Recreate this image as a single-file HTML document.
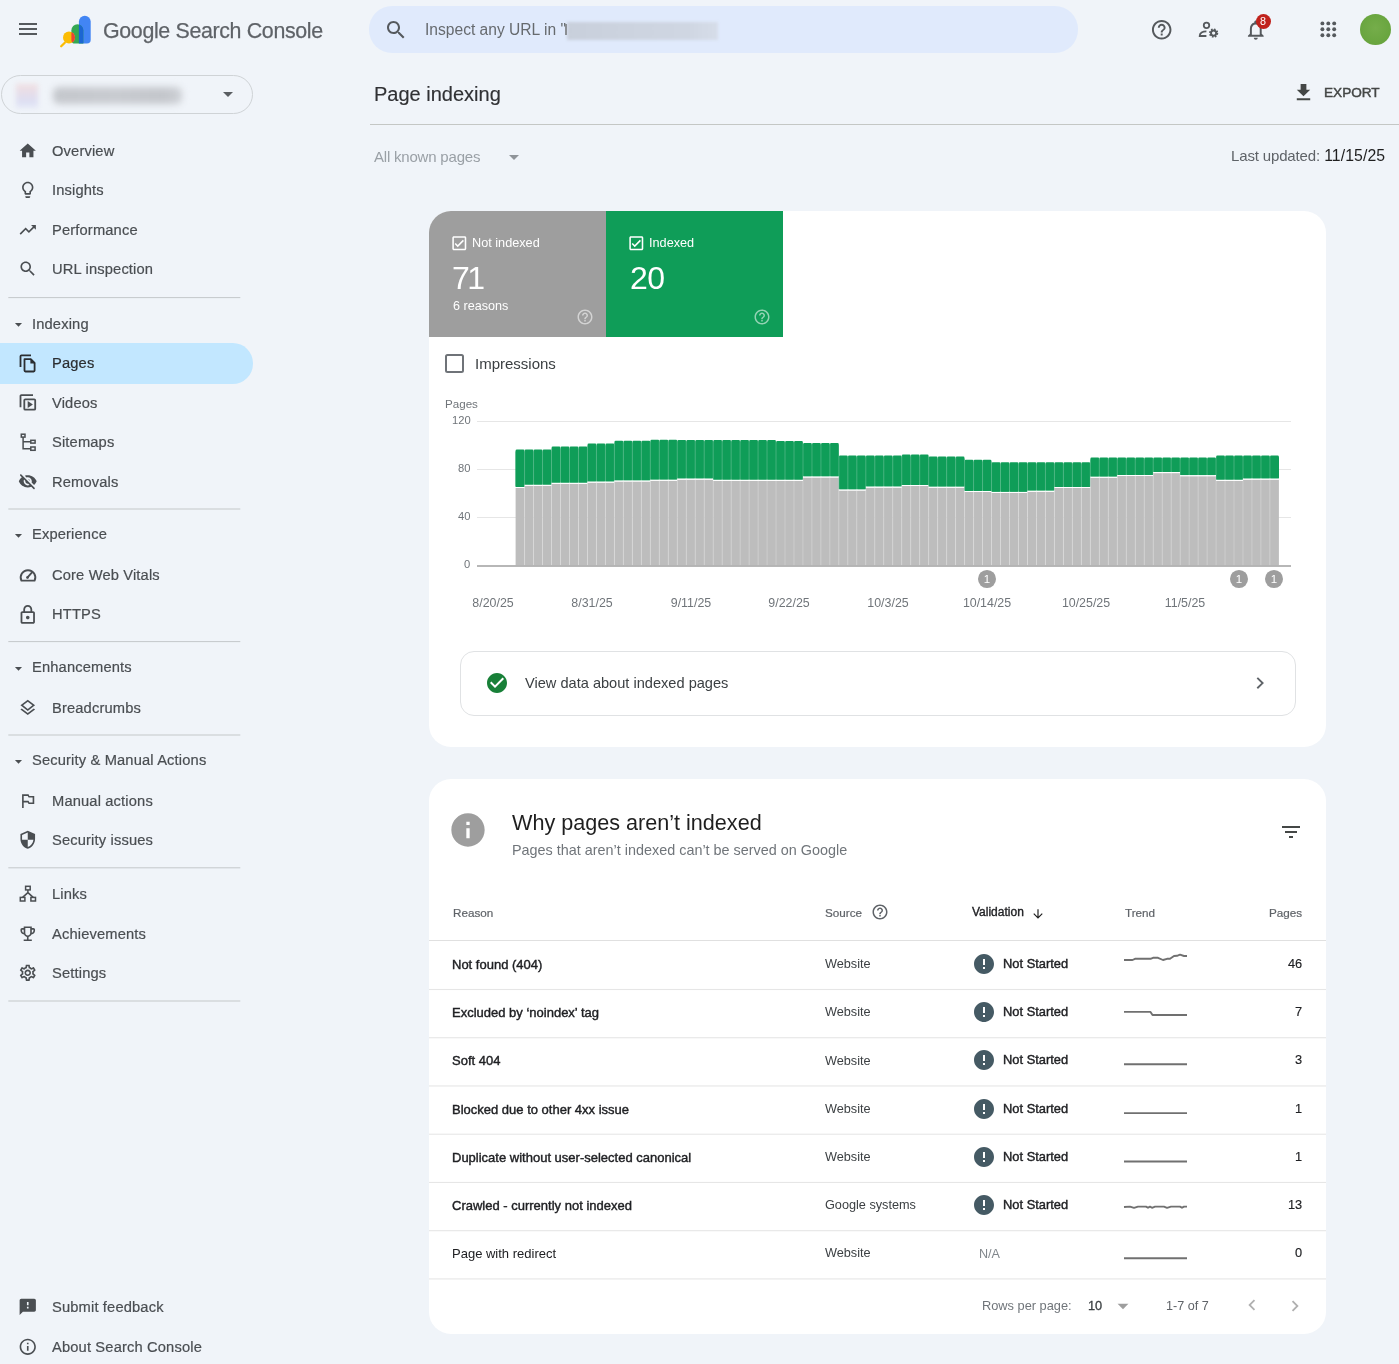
<!DOCTYPE html><html><head><meta charset="utf-8"><style>
html,body{margin:0;padding:0;}
body{width:1399px;height:1364px;overflow:hidden;position:relative;background:#f0f4f9;font-family:"Liberation Sans", sans-serif;}
.t{position:absolute;white-space:nowrap;line-height:1;will-change:transform;}
svg{display:block;}
</style></head><body>
<div style="position:absolute;left:19px;top:23.4px;width:18px;height:1.9px;background:#55595d;"></div>
<div style="position:absolute;left:19px;top:28.4px;width:18px;height:1.9px;background:#55595d;"></div>
<div style="position:absolute;left:19px;top:33.4px;width:18px;height:1.9px;background:#55595d;"></div>
<svg style="position:absolute;left:56px;top:12px;" width="40" height="40" viewBox="0 0 40 40">
<defs>
<clipPath id="cg"><path d="M15.4 18.25 a5.95 5.95 0 0 1 11.9 0 V31.5 H19 a3.6 3.6 0 0 1 -3.6 -3.6 Z"/></clipPath>
</defs>
<path d="M22.9 9.6 a5.9 5.9 0 0 1 11.8 0 V27.7 a3.8 3.8 0 0 1 -3.8 3.8 H22.9 Z" fill="#4285f4"/>
<path d="M15.4 18.25 a5.95 5.95 0 0 1 11.9 0 V31.5 H19 a3.6 3.6 0 0 1 -3.6 -3.6 Z" fill="#34a853"/>
<path d="M22.9 9.6 a5.9 5.9 0 0 1 11.8 0 V27.7 a3.8 3.8 0 0 1 -3.8 3.8 H22.9 Z" fill="#1b66d2" clip-path="url(#cg)"/>
<circle cx="13" cy="25.6" r="6" fill="#fbbc04"/>
<circle cx="13" cy="25.6" r="6" fill="#ea4335" clip-path="url(#cg)"/>
<line x1="5.2" y1="34.3" x2="8.8" y2="30.8" stroke="#fbbc04" stroke-width="2.3" stroke-linecap="round"/>
</svg>
<div class="t" style="left:103px;top:20.78px;font-size:21.4px;color:#5f6368;font-weight:400;letter-spacing:-0.35px;-webkit-text-stroke:0.25px #5f6368;">Google Search Console</div>
<div style="position:absolute;left:369px;top:6px;width:709px;height:46.5px;background:#e0eafc;border-radius:23px;"></div>
<svg style="position:absolute;left:384.00px;top:17.50px;" width="24" height="24" viewBox="0 0 24 24"><path fill="#55595d" d="M15.5 14h-.79l-.28-.27C15.41 12.59 16 11.11 16 9.5 16 5.91 13.09 3 9.5 3S3 5.91 3 9.5 5.91 16 9.5 16c1.61 0 3.09-.59 4.23-1.57l.27.28v.79l5 4.99L20.49 19l-4.99-5zm-6 0C7.01 14 5 11.99 5 9.5S7.01 5 9.5 5 14 7.01 14 9.5 11.990 14 9.5 14z"/></svg>
<div class="t" style="left:425px;top:21.69px;font-size:15.6px;color:#666a6e;font-weight:400;">Inspect any URL in &quot;</div>
<div style="position:absolute;left:567px;top:21.5px;width:151px;height:18.5px;background:linear-gradient(90deg,#c8cfdb 0%,#ccd3df 40%,#cfd6e2 80%,#d6dde9 100%);filter:blur(1.6px);"></div>
<div style="position:absolute;left:565.4px;top:23.5px;width:1.2px;height:11.8px;background:#8a8e93;"></div>
<svg style="position:absolute;left:1149.60px;top:17.50px;" width="23.4" height="23.4" viewBox="0 0 24 24"><path fill="#55595d" d="M11 18h2v-2h-2v2zm1-16C6.48 2 2 6.48 2 12s4.48 10 10 10 10-4.48 10-10S17.52 2 12 2zm0 18c-4.41 0-8-3.59-8-8s3.59-8 8-8 8 3.59 8 8-3.59 8-8 8zm0-14c-2.21 0-4 1.79-4 4h2c0-1.1.9-2 2-2s2 .9 2 2c0 2-3 1.75-3 5h2c0-2.25 3-2.5 3-5 0-2.21-1.79-4-4-4z"/></svg>
<svg style="position:absolute;left:1190px;top:15px;" width="32" height="28" viewBox="0 0 32 28"><g transform="translate(-1190,-15)">
<circle cx="1206.5" cy="25.3" r="2.75" fill="none" stroke="#55595d" stroke-width="1.8"/>
<path d="M1206.4 31.3 C1202.6 31.3 1199.7 33.2 1199.7 36 H1206.4" fill="none" stroke="#55595d" stroke-width="1.8"/>
<circle cx="1213.6" cy="33.1" r="3.7" fill="none" stroke="#55595d" stroke-width="1.9" stroke-dasharray="1.55 1.35"/>
<circle cx="1213.6" cy="33.1" r="2.6" fill="none" stroke="#55595d" stroke-width="1.9"/>
</g></svg>
<svg style="position:absolute;left:1244.00px;top:18.20px;" width="23.6" height="23.6" viewBox="0 0 24 24"><path fill="#55595d" d="M12 22c1.1 0 2-.9 2-2h-4c0 1.1.89 2 2 2zm6-6v-5c0-3.07-1.64-5.64-4.5-6.32V4c0-.83-.67-1.5-1.5-1.5s-1.5.67-1.5 1.5v.68C7.63 5.36 6 7.920 6 11v5l-2 2v1h16v-1l-2-2zm-2 1H8v-6c0-2.48 1.51-4.5 4-4.5s4 2.02 4 4.5v6z"/></svg>
<div style="position:absolute;left:1255.9px;top:13.8px;width:15px;height:15px;border-radius:50%;background:#c0221c;"></div>
<div class="t" style="left:1263.4px;transform:translateX(-50%);top:16.16px;font-size:10.8px;color:#ffffff;font-weight:400;">8</div>
<svg style="position:absolute;left:1320.3px;top:21.2px;" width="17" height="17" viewBox="0 0 17 17"><circle cx="2.40" cy="2.40" r="1.95" fill="#55595d"/><circle cx="2.40" cy="8.30" r="1.95" fill="#55595d"/><circle cx="2.40" cy="14.20" r="1.95" fill="#55595d"/><circle cx="8.30" cy="2.40" r="1.95" fill="#55595d"/><circle cx="8.30" cy="8.30" r="1.95" fill="#55595d"/><circle cx="8.30" cy="14.20" r="1.95" fill="#55595d"/><circle cx="14.20" cy="2.40" r="1.95" fill="#55595d"/><circle cx="14.20" cy="8.30" r="1.95" fill="#55595d"/><circle cx="14.20" cy="14.20" r="1.95" fill="#55595d"/></svg>
<div style="position:absolute;left:1360.3px;top:13.7px;width:31.2px;height:31.2px;border-radius:50%;background:radial-gradient(circle at 50% 45%,#75ad4a 0%,#6aa640 60%,#649f3b 100%);"></div>
<div style="position:absolute;left:1px;top:75px;width:249.5px;height:36.5px;border:1px solid #cfd3d6;border-radius:20px;"></div>
<div style="position:absolute;left:16px;top:83.5px;width:22px;height:24px;background:linear-gradient(180deg,#f1dfe1 0%,#e4ddeb 45%,#dcdff3 75%,#e6e9f6 100%);filter:blur(2.5px);"></div>
<div style="position:absolute;left:53px;top:86.5px;width:129px;height:17px;background:linear-gradient(90deg,#c4c7cc,#c8cbd0 50%,#c3c6cb 85%,#cdd0d5);filter:blur(3.6px);border-radius:6px;"></div>
<svg style="position:absolute;left:216.00px;top:82.00px;" width="24" height="24" viewBox="0 0 24 24"><path fill="#5a5e62" d="M7 10l5 5 5-5z"/></svg>
<div style="position:absolute;left:0px;top:343.3px;width:252.7px;height:40.3px;background:#c2e7ff;border-radius:0 20.15px 20.15px 0;"></div>
<div class="t" style="left:52px;top:143.85px;font-size:14.7px;color:#4a4e52;font-weight:400;letter-spacing:0.15px;-webkit-text-stroke:0.2px #4a4e52;">Overview</div>
<svg style="position:absolute;left:18.25px;top:140.95px;" width="19.5" height="19.5" viewBox="0 0 24 24"><path fill="#4a4e52" d="M10 20v-6h4v6h5v-8h3L12 3 2 12h3v8z"/></svg>
<div class="t" style="left:52px;top:183.25px;font-size:14.7px;color:#4a4e52;font-weight:400;letter-spacing:0.15px;-webkit-text-stroke:0.2px #4a4e52;">Insights</div>
<svg style="position:absolute;left:18.25px;top:180.35px;" width="19.5" height="19.5" viewBox="0 0 24 24"><path fill="#4a4e52" d="M9 21c0 .55.45 1 1 1h4c.55 0 1-.45 1-1v-1H9v1zm3-19C8.14 2 5 5.14 5 9c0 2.38 1.19 4.47 3 5.74V17c0 .55.45 1 1 1h6c.55 0 1-.45 1-1v-2.26c1.81-1.27 3-3.36 3-5.74 0-3.86-3.14-7-7-7zm2.85 11.1l-.85.6V16h-4v-2.3l-.85-.6C7.8 12.16 7 10.630 7 9c0-2.76 2.24-5 5-5s5 2.24 5 5c0 1.63-.8 3.16-2.15 4.1z"/></svg>
<div class="t" style="left:52px;top:222.65px;font-size:14.7px;color:#4a4e52;font-weight:400;letter-spacing:0.15px;-webkit-text-stroke:0.2px #4a4e52;">Performance</div>
<svg style="position:absolute;left:18.25px;top:219.75px;" width="19.5" height="19.5" viewBox="0 0 24 24"><path fill="#4a4e52" d="M16 6l2.29 2.29-4.88 4.88-4-4L2 16.59 3.41 18l6-6 4 4 6.3-6.29L22 12V6z"/></svg>
<div class="t" style="left:52px;top:262.05px;font-size:14.7px;color:#4a4e52;font-weight:400;letter-spacing:0.15px;-webkit-text-stroke:0.2px #4a4e52;">URL inspection</div>
<svg style="position:absolute;left:18.25px;top:259.15px;" width="19.5" height="19.5" viewBox="0 0 24 24"><path fill="#4a4e52" d="M15.5 14h-.79l-.28-.27C15.41 12.59 16 11.11 16 9.5 16 5.91 13.09 3 9.5 3S3 5.91 3 9.5 5.91 16 9.5 16c1.61 0 3.09-.59 4.23-1.57l.27.28v.79l5 4.99L20.49 19l-4.99-5zm-6 0C7.01 14 5 11.99 5 9.5S7.01 5 9.5 5 14 7.01 14 9.5 11.990 14 9.5 14z"/></svg>
<div class="t" style="left:52px;top:356.45px;font-size:14.7px;color:#2b2e31;font-weight:400;letter-spacing:0.15px;-webkit-text-stroke:0.2px #2b2e31;">Pages</div>
<div class="t" style="left:52px;top:395.75px;font-size:14.7px;color:#4a4e52;font-weight:400;letter-spacing:0.15px;-webkit-text-stroke:0.2px #4a4e52;">Videos</div>
<div class="t" style="left:52px;top:435.25px;font-size:14.7px;color:#4a4e52;font-weight:400;letter-spacing:0.15px;-webkit-text-stroke:0.2px #4a4e52;">Sitemaps</div>
<div class="t" style="left:52px;top:474.55px;font-size:14.7px;color:#4a4e52;font-weight:400;letter-spacing:0.15px;-webkit-text-stroke:0.2px #4a4e52;">Removals</div>
<svg style="position:absolute;left:18.25px;top:471.65px;" width="19.5" height="19.5" viewBox="0 0 24 24"><path fill="#4a4e52" d="M12 6.5c2.76 0 5 2.24 5 5 0 .51-.1 1-.24 1.46l3.06 3.06c1.39-1.23 2.49-2.77 3.18-4.53C21.27 7.11 17 4 12 4c-1.27 0-2.49.2-3.64.57l2.17 2.17c.47-.14.96-.24 1.47-.24zM2.71 3.16c-.39.39-.39 1.02 0 1.41l1.970 1.97C3.06 7.83 1.77 9.53 1 11.5 2.73 15.89 7 19 12 19c1.52 0 2.97-.3 4.31-.82l2.72 2.72c.39.39 1.02.39 1.41 0 .39-.39.39-1.02 0-1.41L4.13 3.16c-.39-.39-1.03-.39-1.42 0zM12 16.5c-2.76 0-5-2.24-5-5 0-.77.18-1.5.49-2.14l1.57 1.57c-.03.18-.06.37-.06.57 0 1.66 1.34 3 3 3 .2 0 .38-.03.57-.07L14.14 16c-.65.32-1.37.5-2.14.5zm2.97-5.33c-.15-1.4-1.25-2.49-2.64-2.64l2.64 2.64z"/></svg>
<div class="t" style="left:52px;top:567.65px;font-size:14.7px;color:#4a4e52;font-weight:400;letter-spacing:0.15px;-webkit-text-stroke:0.2px #4a4e52;">Core Web Vitals</div>
<svg style="position:absolute;left:18px;top:564.5px;" width="20" height="20" viewBox="0 0 20 20"><path d="M3.4 15.6 A7.3 7.3 0 1 1 16.6 15.6 Z" fill="none" stroke="#4a4e52" stroke-width="1.9" stroke-linejoin="round"/>
<path d="M9.3 12.6 L13.8 7.6" stroke="#4a4e52" stroke-width="1.9" stroke-linecap="round"/><circle cx="9.6" cy="12.4" r="1.3" fill="#4a4e52"/></svg>
<div class="t" style="left:52px;top:607.25px;font-size:14.7px;color:#4a4e52;font-weight:400;letter-spacing:0.15px;-webkit-text-stroke:0.2px #4a4e52;">HTTPS</div>
<svg style="position:absolute;left:17.35px;top:603.85px;" width="21.5" height="21.5" viewBox="0 0 24 24"><path fill="#4a4e52" d="M18 8h-1V6c0-2.76-2.24-5-5-5S7 3.24 7 6v2H6c-1.1 0-2 .9-2 2v10c0 1.1.9 2 2 2h12c1.1 0 2-.9 2-2V10c0-1.1-.9-2-2-2zM9 6c0-1.66 1.34-3 3-3s3 1.34 3 3v2H9V6zm9 14H6V10h12v10zm-6-3c1.1 0 2-.9 2-2s-.9-2-2-2-2 .9-2 2 .9 2 2 2z"/></svg>
<div class="t" style="left:52px;top:700.85px;font-size:14.7px;color:#4a4e52;font-weight:400;letter-spacing:0.15px;-webkit-text-stroke:0.2px #4a4e52;">Breadcrumbs</div>
<svg style="position:absolute;left:18.25px;top:697.95px;" width="19.5" height="19.5" viewBox="0 0 24 24"><path fill="#4a4e52" d="M11.99 18.54l-7.37-5.73L3 14.07l9 7 9-7-1.63-1.27-7.38 5.74zM12 16l7.36-5.73L21 9l-9-7-9 7 1.63 1.27L12 16zm0-11.47L17.74 9 12 13.47 6.26 9 12 4.53z"/></svg>
<div class="t" style="left:52px;top:793.65px;font-size:14.7px;color:#4a4e52;font-weight:400;letter-spacing:0.15px;-webkit-text-stroke:0.2px #4a4e52;">Manual actions</div>
<svg style="position:absolute;left:18.25px;top:790.75px;" width="19.5" height="19.5" viewBox="0 0 24 24"><path fill="#4a4e52" d="M14 6l-1-2H5v17h2v-7h5l1 2h7V6h-6zm4 8h-4l-1-2H7V6h5l1 2h5v6z"/></svg>
<div class="t" style="left:52px;top:833.05px;font-size:14.7px;color:#4a4e52;font-weight:400;letter-spacing:0.15px;-webkit-text-stroke:0.2px #4a4e52;">Security issues</div>
<svg style="position:absolute;left:18.25px;top:830.15px;" width="19.5" height="19.5" viewBox="0 0 24 24"><path fill="#4a4e52" d="M12 1L3 5v6c0 5.55 3.84 10.74 9 12 5.16-1.26 9-6.45 9-12V5l-9-4zm0 10.99h7c-.53 4.12-3.28 7.79-7 8.94V12H5V6.3l7-3.11v8.8z"/></svg>
<div class="t" style="left:52px;top:887.35px;font-size:14.7px;color:#4a4e52;font-weight:400;letter-spacing:0.15px;-webkit-text-stroke:0.2px #4a4e52;">Links</div>
<div class="t" style="left:52px;top:926.65px;font-size:14.7px;color:#4a4e52;font-weight:400;letter-spacing:0.15px;-webkit-text-stroke:0.2px #4a4e52;">Achievements</div>
<svg style="position:absolute;left:18.25px;top:923.75px;" width="19.5" height="19.5" viewBox="0 0 24 24"><path fill="#4a4e52" d="M19 5h-2V3H7v2H5c-1.1 0-2 .9-2 2v1c0 2.55 1.92 4.63 4.39 4.94.63 1.5 1.98 2.63 3.61 2.96V19H7v2h10v-2h-4v-3.1c1.63-.33 2.98-1.46 3.61-2.96C19.08 12.630 21 10.55 21 8V7c0-1.1-.9-2-2-2zM5 8V7h2v3.82C5.84 10.4 5 9.3 5 8zm7 6c-1.65 0-3-1.35-3-3V5h6v6c0 1.65-1.35 3-3 3zm7-6c0 1.3-.84 2.4-2 2.82V7h2v1z"/></svg>
<div class="t" style="left:52px;top:966.05px;font-size:14.7px;color:#4a4e52;font-weight:400;letter-spacing:0.15px;-webkit-text-stroke:0.2px #4a4e52;">Settings</div>
<svg style="position:absolute;left:18.25px;top:963.15px;" width="19.5" height="19.5" viewBox="0 0 24 24"><path fill="#4a4e52" d="M19.43 12.98c.04-.32.07-.64.07-.98 0-.34-.03-.66-.07-.98l2.11-1.65c.19-.15.24-.42.12-.64l-2-3.46c-.09-.16-.26-.25-.44-.25-.06 0-.12.01-.17.03l-2.49 1c-.52-.4-1.08-.73-1.69-.98l-.38-2.65C14.46 2.18 14.25 2 14 2h-4c-.25 0-.46.18-.49.42l-.38 2.65c-.61.25-1.17.59-1.69.98l-2.49-1c-.06-.02-.12-.03-.18-.03-.17 0-.34.09-.43.25l-2 3.46c-.13.22-.07.49.12.64l2.11 1.65c-.04.32-.07.65-.07.98 0 .33.03.66.07.98l-2.11 1.65c-.19.15-.24.42-.12.64l2 3.46c.09.16.26.25.44.25.06 0 .12-.01.17-.03l2.49-1c.52.4 1.08.73 1.69.98l.38 2.65c.03.24.24.42.49.42h4c.25 0 .46-.18.49-.42l.38-2.65c.61-.25 1.17-.59 1.69-.98l2.49 1c.06.02.12.03.18.03.17 0 .34-.09.43-.25l2-3.46c.12-.22.07-.49-.12-.64l-2.11-1.65zm-1.98-1.71c.04.31.05.52.05.73 0 .21-.02.43-.05.73l-.14 1.13.89.7 1.08.84-.7 1.21-1.27-.51-1.04-.42-.9.68c-.43.32-.84.56-1.25.73l-1.06.43-.16 1.13-.2 1.35h-1.4l-.19-1.35-.16-1.13-1.06-.43c-.43-.18-.83-.41-1.230-.71l-.91-.7-1.06.43-1.27.51-.7-1.21 1.08-.84.89-.7-.14-1.13c-.03-.31-.05-.54-.05-.74s.02-.43.05-.73l.14-1.13-.89-.7-1.08-.84.7-1.21 1.27.51 1.04.42.9-.68c.43-.32.84-.56 1.25-.73l1.06-.43.16-1.13.2-1.35h1.39l.19 1.35.16 1.13 1.06.43c.43.18.83.41 1.23.71l.91.7 1.06-.43 1.27-.51.7 1.21-1.07.85-.89.7.14 1.13zM12 8c-2.21 0-4 1.79-4 4s1.79 4 4 4 4-1.79 4-4-1.79-4-4-4zm0 6c-1.1 0-2-.9-2-2s.9-2 2-2 2 .9 2 2-.9 2-2 2z"/></svg>
<div class="t" style="left:52px;top:1300.35px;font-size:14.7px;color:#4a4e52;font-weight:400;letter-spacing:0.15px;-webkit-text-stroke:0.2px #4a4e52;">Submit feedback</div>
<svg style="position:absolute;left:18.25px;top:1297.45px;" width="19.5" height="19.5" viewBox="0 0 24 24"><path fill="#4a4e52" d="M20 2H4c-1.1 0-1.99.9-1.99 2L2 22l4-4h14c1.1 0 2-.9 2-2V4c0-1.1-.9-2-2-2zm-7 12h-2v-2h2v2zm0-4h-2V6h2v4z"/></svg>
<div class="t" style="left:52px;top:1339.55px;font-size:14.7px;color:#4a4e52;font-weight:400;letter-spacing:0.15px;-webkit-text-stroke:0.2px #4a4e52;">About Search Console</div>
<svg style="position:absolute;left:18.25px;top:1336.65px;" width="19.5" height="19.5" viewBox="0 0 24 24"><path fill="#4a4e52" d="M11 7h2v2h-2zm0 4h2v6h-2zm1-9C6.48 2 2 6.48 2 12s4.48 10 10 10 10-4.48 10-10S17.52 2 12 2zm0 18c-4.41 0-8-3.59-8-8s3.59-8 8-8 8 3.59 8 8-3.59 8-8 8z"/></svg>
<svg style="position:absolute;left:0px;top:0px;" width="60" height="1000" viewBox="0 0 60 1000">
<path d="M20.5 367 V356.2 a0.9 0.9 0 0 1 0.9 -0.9 H31" fill="none" stroke="#2b2e31" stroke-width="1.8"/>
<path d="M24.5 359.2 H30.8 L34.6 363 V370.6 a0.9 0.9 0 0 1 -0.9 0.9 H25.4 a0.9 0.9 0 0 1 -0.9 -0.9 Z" fill="none" stroke="#2b2e31" stroke-width="1.8" stroke-linejoin="round"/>
<path d="M30.4 358.5 L35.3 363.4 H30.4 Z" fill="#2b2e31"/>
<path d="M20.5 407.3 V396.1 a0.9 0.9 0 0 1 0.9 -0.9 H33" fill="none" stroke="#4a4e52" stroke-width="1.8"/>
<rect x="24.3" y="399.3" width="10.9" height="10.4" rx="1" fill="none" stroke="#4a4e52" stroke-width="1.8"/>
<path d="M27.7 401 L32.9 404.5 L27.7 408 Z" fill="#4a4e52"/>
<rect x="21.3" y="434.2" width="3.7" height="2.9" fill="none" stroke="#4a4e52" stroke-width="1.5"/>
<rect x="30.8" y="440.3" width="4.3" height="2.8" fill="none" stroke="#4a4e52" stroke-width="1.5"/>
<rect x="30.8" y="447" width="4.3" height="3.3" fill="none" stroke="#4a4e52" stroke-width="1.5"/>
<path d="M23.1 437.1 V448.7 H30.8 M23.1 441.7 H30.8" fill="none" stroke="#4a4e52" stroke-width="1.5"/>
<rect x="25.6" y="886.3" width="4.6" height="3.6" fill="none" stroke="#4a4e52" stroke-width="1.5"/>
<rect x="20.3" y="897.4" width="4.6" height="3.6" fill="none" stroke="#4a4e52" stroke-width="1.5"/>
<rect x="30.9" y="897.4" width="4.6" height="3.6" fill="none" stroke="#4a4e52" stroke-width="1.5"/>
<path d="M27.9 889.9 V893 M22.6 897.4 L27.9 892.6 L33.2 897.4" fill="none" stroke="#4a4e52" stroke-width="1.5"/>
</svg>
<div class="t" style="left:32px;top:316.65px;font-size:14.7px;color:#4a4e52;font-weight:400;letter-spacing:0.15px;-webkit-text-stroke:0.2px #4a4e52;">Indexing</div>
<svg style="position:absolute;left:9.50px;top:316.30px;" width="17" height="17" viewBox="0 0 24 24"><path fill="#4a4e52" d="M7 10l5 5 5-5z"/></svg>
<div class="t" style="left:32px;top:527.15px;font-size:14.7px;color:#4a4e52;font-weight:400;letter-spacing:0.15px;-webkit-text-stroke:0.2px #4a4e52;">Experience</div>
<svg style="position:absolute;left:9.50px;top:526.80px;" width="17" height="17" viewBox="0 0 24 24"><path fill="#4a4e52" d="M7 10l5 5 5-5z"/></svg>
<div class="t" style="left:32px;top:659.95px;font-size:14.7px;color:#4a4e52;font-weight:400;letter-spacing:0.15px;-webkit-text-stroke:0.2px #4a4e52;">Enhancements</div>
<svg style="position:absolute;left:9.50px;top:659.60px;" width="17" height="17" viewBox="0 0 24 24"><path fill="#4a4e52" d="M7 10l5 5 5-5z"/></svg>
<div class="t" style="left:32px;top:753.05px;font-size:14.7px;color:#4a4e52;font-weight:400;letter-spacing:0.15px;-webkit-text-stroke:0.2px #4a4e52;">Security &amp; Manual Actions</div>
<svg style="position:absolute;left:9.50px;top:752.70px;" width="17" height="17" viewBox="0 0 24 24"><path fill="#4a4e52" d="M7 10l5 5 5-5z"/></svg>
<svg style="position:absolute;left:0px;top:0px;" width="260" height="1010" viewBox="0 0 260 1010"><rect x="8.3" y="297.1" width="232" height="1" fill="#c4c8ca"/><rect x="8.3" y="508.5" width="232" height="1" fill="#c4c8ca"/><rect x="8.3" y="641.1" width="232" height="1" fill="#c4c8ca"/><rect x="8.3" y="734.5" width="232" height="1" fill="#c4c8ca"/><rect x="8.3" y="867.3" width="232" height="1" fill="#c4c8ca"/><rect x="8.3" y="1000.5" width="232" height="1" fill="#c4c8ca"/></svg>
<div class="t" style="left:374px;top:83.67px;font-size:20px;color:#303134;font-weight:400;-webkit-text-stroke:0.15px #303134;">Page indexing</div>
<svg style="position:absolute;left:1292.20px;top:80.80px;" width="23" height="23" viewBox="0 0 24 24"><path fill="#444746" d="M19 9h-4V3H9v6H5l7 7 7-7zM5 18v2h14v-2H5z"/></svg>
<div class="t" style="left:1323.8px;top:86.38px;font-size:13.6px;color:#444746;font-weight:400;-webkit-text-stroke:0.45px #444746;">EXPORT</div>
<div style="position:absolute;left:370px;top:124px;width:1029px;height:1px;background:#c4c7c5;"></div>
<div class="t" style="left:374px;top:149.00px;font-size:15px;color:#9aa0a6;font-weight:400;letter-spacing:-0.2px;">All known pages</div>
<svg style="position:absolute;left:501.50px;top:145.00px;" width="24" height="24" viewBox="0 0 24 24"><path fill="#8f9499" d="M7 10l5 5 5-5z"/></svg>
<div class="t" style="right:13.5px;top:147.70px;font-size:15px;color:#5f6368;font-weight:400;"><span style="letter-spacing:-0.15px">Last updated:</span> <span style="color:#1f1f1f;font-size:15.8px;letter-spacing:0.1px">11/15/25</span></div>
<div style="position:absolute;left:429px;top:211px;width:897px;height:536px;background:#fff;border-radius:22px;"></div>
<div style="position:absolute;left:429px;top:211px;width:177px;height:126.3px;background:#9e9e9e;border-top-left-radius:22px;"></div>
<div style="position:absolute;left:606px;top:211px;width:177px;height:126.3px;background:#0f9d58;"></div>
<svg style="position:absolute;left:449.90px;top:233.50px;" width="18.6" height="18.6" viewBox="0 0 24 24"><path fill="#fff" d="M19 3H5c-1.1 0-2 .9-2 2v14c0 1.1.9 2 2 2h14c1.1 0 2-.9 2-2V5c0-1.1-.9-2-2-2zm0 16H5V5h14v14zM17.99 9l-1.41-1.42-6.59 6.59-2.58-2.57-1.42 1.41 4 3.99z"/></svg>
<div class="t" style="left:472px;top:236.75px;font-size:12.7px;color:#fff;font-weight:400;">Not indexed</div>
<div class="t" style="left:452.2px;top:261.51px;font-size:32px;color:#fff;font-weight:400;letter-spacing:-2.6px;">71</div>
<div class="t" style="left:452.5px;top:300.23px;font-size:12.6px;color:#fff;font-weight:400;">6 reasons</div>
<svg style="position:absolute;left:576.40px;top:308.30px;" width="18" height="18" viewBox="0 0 24 24"><path fill="rgba(255,255,255,0.55)" d="M11 18h2v-2h-2v2zm1-16C6.48 2 2 6.48 2 12s4.48 10 10 10 10-4.48 10-10S17.52 2 12 2zm0 18c-4.41 0-8-3.59-8-8s3.59-8 8-8 8 3.59 8 8-3.59 8-8 8zm0-14c-2.21 0-4 1.79-4 4h2c0-1.1.9-2 2-2s2 .9 2 2c0 2-3 1.75-3 5h2c0-2.25 3-2.5 3-5 0-2.21-1.79-4-4-4z"/></svg>
<svg style="position:absolute;left:626.90px;top:233.50px;" width="18.6" height="18.6" viewBox="0 0 24 24"><path fill="#fff" d="M19 3H5c-1.1 0-2 .9-2 2v14c0 1.1.9 2 2 2h14c1.1 0 2-.9 2-2V5c0-1.1-.9-2-2-2zm0 16H5V5h14v14zM17.99 9l-1.41-1.42-6.59 6.59-2.58-2.57-1.42 1.41 4 3.99z"/></svg>
<div class="t" style="left:649.3px;top:236.75px;font-size:12.7px;color:#fff;font-weight:400;">Indexed</div>
<div class="t" style="left:630.2px;top:261.51px;font-size:32px;color:#fff;font-weight:400;letter-spacing:-0.6px;">20</div>
<svg style="position:absolute;left:753.40px;top:308.30px;" width="18" height="18" viewBox="0 0 24 24"><path fill="rgba(255,255,255,0.55)" d="M11 18h2v-2h-2v2zm1-16C6.48 2 2 6.48 2 12s4.48 10 10 10 10-4.48 10-10S17.52 2 12 2zm0 18c-4.41 0-8-3.59-8-8s3.59-8 8-8 8 3.59 8 8-3.59 8-8 8zm0-14c-2.21 0-4 1.79-4 4h2c0-1.1.9-2 2-2s2 .9 2 2c0 2-3 1.75-3 5h2c0-2.25 3-2.5 3-5 0-2.21-1.79-4-4-4z"/></svg>
<div style="position:absolute;left:445px;top:354px;width:15px;height:15px;border:2px solid #6f7378;border-radius:2.5px;"></div>
<div class="t" style="left:474.5px;top:355.80px;font-size:15px;color:#3c4043;font-weight:400;">Impressions</div>
<div class="t" style="left:445px;top:397.68px;font-size:11.6px;color:#70757a;font-weight:400;">Pages</div>
<div class="t" style="right:928.5px;top:415.32px;font-size:11.2px;color:#70757a;font-weight:400;">120</div>
<div style="position:absolute;left:477px;top:421.0px;width:814px;height:1px;background:#e6e6e6;"></div>
<div class="t" style="right:928.5px;top:463.32px;font-size:11.2px;color:#70757a;font-weight:400;">80</div>
<div style="position:absolute;left:477px;top:469.0px;width:814px;height:1px;background:#e6e6e6;"></div>
<div class="t" style="right:928.5px;top:511.32px;font-size:11.2px;color:#70757a;font-weight:400;">40</div>
<div style="position:absolute;left:477px;top:517.0px;width:814px;height:1px;background:#e6e6e6;"></div>
<div class="t" style="right:928.5px;top:559.32px;font-size:11.2px;color:#70757a;font-weight:400;">0</div>
<svg style="position:absolute;left:0px;top:0px;pointer-events:none;" width="1399" height="620" viewBox="0 0 1399 620"><rect x="515.60" y="488.00" width="8.980" height="77.20" fill="#bdbdbd"/><rect x="515.60" y="449.40" width="8.980" height="37.60" rx="1.3" fill="#0f9d58"/><rect x="515.60" y="451.40" width="8.980" height="35.60" fill="#0f9d58"/><rect x="515.60" y="487.00" width="8.980" height="1" fill="#ffffff"/><rect x="524.58" y="485.80" width="8.980" height="79.40" fill="#bdbdbd"/><rect x="524.58" y="449.40" width="8.980" height="35.40" rx="1.3" fill="#0f9d58"/><rect x="524.58" y="451.40" width="8.980" height="33.40" fill="#0f9d58"/><rect x="524.58" y="484.80" width="8.980" height="1" fill="#ffffff"/><rect x="533.56" y="485.80" width="8.980" height="79.40" fill="#bdbdbd"/><rect x="533.56" y="449.40" width="8.980" height="35.40" rx="1.3" fill="#0f9d58"/><rect x="533.56" y="451.40" width="8.980" height="33.40" fill="#0f9d58"/><rect x="533.56" y="484.80" width="8.980" height="1" fill="#ffffff"/><rect x="542.54" y="485.80" width="8.980" height="79.40" fill="#bdbdbd"/><rect x="542.54" y="449.40" width="8.980" height="35.40" rx="1.3" fill="#0f9d58"/><rect x="542.54" y="451.40" width="8.980" height="33.40" fill="#0f9d58"/><rect x="542.54" y="484.80" width="8.980" height="1" fill="#ffffff"/><rect x="551.52" y="483.80" width="8.980" height="81.40" fill="#bdbdbd"/><rect x="551.52" y="446.60" width="8.980" height="36.20" rx="1.3" fill="#0f9d58"/><rect x="551.52" y="448.60" width="8.980" height="34.20" fill="#0f9d58"/><rect x="551.52" y="482.80" width="8.980" height="1" fill="#ffffff"/><rect x="560.50" y="483.80" width="8.980" height="81.40" fill="#bdbdbd"/><rect x="560.50" y="446.60" width="8.980" height="36.20" rx="1.3" fill="#0f9d58"/><rect x="560.50" y="448.60" width="8.980" height="34.20" fill="#0f9d58"/><rect x="560.50" y="482.80" width="8.980" height="1" fill="#ffffff"/><rect x="569.48" y="483.80" width="8.980" height="81.40" fill="#bdbdbd"/><rect x="569.48" y="446.60" width="8.980" height="36.20" rx="1.3" fill="#0f9d58"/><rect x="569.48" y="448.60" width="8.980" height="34.20" fill="#0f9d58"/><rect x="569.48" y="482.80" width="8.980" height="1" fill="#ffffff"/><rect x="578.46" y="483.80" width="8.980" height="81.40" fill="#bdbdbd"/><rect x="578.46" y="446.60" width="8.980" height="36.20" rx="1.3" fill="#0f9d58"/><rect x="578.46" y="448.60" width="8.980" height="34.20" fill="#0f9d58"/><rect x="578.46" y="482.80" width="8.980" height="1" fill="#ffffff"/><rect x="587.44" y="482.60" width="8.980" height="82.60" fill="#bdbdbd"/><rect x="587.44" y="443.60" width="8.980" height="38.00" rx="1.3" fill="#0f9d58"/><rect x="587.44" y="445.60" width="8.980" height="36.00" fill="#0f9d58"/><rect x="587.44" y="481.60" width="8.980" height="1" fill="#ffffff"/><rect x="596.42" y="482.60" width="8.980" height="82.60" fill="#bdbdbd"/><rect x="596.42" y="443.60" width="8.980" height="38.00" rx="1.3" fill="#0f9d58"/><rect x="596.42" y="445.60" width="8.980" height="36.00" fill="#0f9d58"/><rect x="596.42" y="481.60" width="8.980" height="1" fill="#ffffff"/><rect x="605.40" y="482.60" width="8.980" height="82.60" fill="#bdbdbd"/><rect x="605.40" y="443.60" width="8.980" height="38.00" rx="1.3" fill="#0f9d58"/><rect x="605.40" y="445.60" width="8.980" height="36.00" fill="#0f9d58"/><rect x="605.40" y="481.60" width="8.980" height="1" fill="#ffffff"/><rect x="614.38" y="481.50" width="8.980" height="83.70" fill="#bdbdbd"/><rect x="614.38" y="440.70" width="8.980" height="39.80" rx="1.3" fill="#0f9d58"/><rect x="614.38" y="442.70" width="8.980" height="37.80" fill="#0f9d58"/><rect x="614.38" y="480.50" width="8.980" height="1" fill="#ffffff"/><rect x="623.36" y="481.50" width="8.980" height="83.70" fill="#bdbdbd"/><rect x="623.36" y="440.70" width="8.980" height="39.80" rx="1.3" fill="#0f9d58"/><rect x="623.36" y="442.70" width="8.980" height="37.80" fill="#0f9d58"/><rect x="623.36" y="480.50" width="8.980" height="1" fill="#ffffff"/><rect x="632.34" y="481.50" width="8.980" height="83.70" fill="#bdbdbd"/><rect x="632.34" y="440.70" width="8.980" height="39.80" rx="1.3" fill="#0f9d58"/><rect x="632.34" y="442.70" width="8.980" height="37.80" fill="#0f9d58"/><rect x="632.34" y="480.50" width="8.980" height="1" fill="#ffffff"/><rect x="641.32" y="481.50" width="8.980" height="83.70" fill="#bdbdbd"/><rect x="641.32" y="440.70" width="8.980" height="39.80" rx="1.3" fill="#0f9d58"/><rect x="641.32" y="442.70" width="8.980" height="37.80" fill="#0f9d58"/><rect x="641.32" y="480.50" width="8.980" height="1" fill="#ffffff"/><rect x="650.30" y="480.70" width="8.980" height="84.50" fill="#bdbdbd"/><rect x="650.30" y="439.70" width="8.980" height="40.00" rx="1.3" fill="#0f9d58"/><rect x="650.30" y="441.70" width="8.980" height="38.00" fill="#0f9d58"/><rect x="650.30" y="479.70" width="8.980" height="1" fill="#ffffff"/><rect x="659.28" y="480.70" width="8.980" height="84.50" fill="#bdbdbd"/><rect x="659.28" y="439.70" width="8.980" height="40.00" rx="1.3" fill="#0f9d58"/><rect x="659.28" y="441.70" width="8.980" height="38.00" fill="#0f9d58"/><rect x="659.28" y="479.70" width="8.980" height="1" fill="#ffffff"/><rect x="668.26" y="480.70" width="8.980" height="84.50" fill="#bdbdbd"/><rect x="668.26" y="439.70" width="8.980" height="40.00" rx="1.3" fill="#0f9d58"/><rect x="668.26" y="441.70" width="8.980" height="38.00" fill="#0f9d58"/><rect x="668.26" y="479.70" width="8.980" height="1" fill="#ffffff"/><rect x="677.24" y="479.60" width="8.980" height="85.60" fill="#bdbdbd"/><rect x="677.24" y="439.90" width="8.980" height="38.70" rx="1.3" fill="#0f9d58"/><rect x="677.24" y="441.90" width="8.980" height="36.70" fill="#0f9d58"/><rect x="677.24" y="478.60" width="8.980" height="1" fill="#ffffff"/><rect x="686.22" y="479.60" width="8.980" height="85.60" fill="#bdbdbd"/><rect x="686.22" y="439.90" width="8.980" height="38.70" rx="1.3" fill="#0f9d58"/><rect x="686.22" y="441.90" width="8.980" height="36.70" fill="#0f9d58"/><rect x="686.22" y="478.60" width="8.980" height="1" fill="#ffffff"/><rect x="695.20" y="479.60" width="8.980" height="85.60" fill="#bdbdbd"/><rect x="695.20" y="439.90" width="8.980" height="38.70" rx="1.3" fill="#0f9d58"/><rect x="695.20" y="441.90" width="8.980" height="36.70" fill="#0f9d58"/><rect x="695.20" y="478.60" width="8.980" height="1" fill="#ffffff"/><rect x="704.18" y="479.60" width="8.980" height="85.60" fill="#bdbdbd"/><rect x="704.18" y="439.90" width="8.980" height="38.70" rx="1.3" fill="#0f9d58"/><rect x="704.18" y="441.90" width="8.980" height="36.70" fill="#0f9d58"/><rect x="704.18" y="478.60" width="8.980" height="1" fill="#ffffff"/><rect x="713.16" y="480.80" width="8.980" height="84.40" fill="#bdbdbd"/><rect x="713.16" y="440.10" width="8.980" height="39.70" rx="1.3" fill="#0f9d58"/><rect x="713.16" y="442.10" width="8.980" height="37.70" fill="#0f9d58"/><rect x="713.16" y="479.80" width="8.980" height="1" fill="#ffffff"/><rect x="722.14" y="480.80" width="8.980" height="84.40" fill="#bdbdbd"/><rect x="722.14" y="440.10" width="8.980" height="39.70" rx="1.3" fill="#0f9d58"/><rect x="722.14" y="442.10" width="8.980" height="37.70" fill="#0f9d58"/><rect x="722.14" y="479.80" width="8.980" height="1" fill="#ffffff"/><rect x="731.12" y="480.80" width="8.980" height="84.40" fill="#bdbdbd"/><rect x="731.12" y="440.10" width="8.980" height="39.70" rx="1.3" fill="#0f9d58"/><rect x="731.12" y="442.10" width="8.980" height="37.70" fill="#0f9d58"/><rect x="731.12" y="479.80" width="8.980" height="1" fill="#ffffff"/><rect x="740.10" y="480.80" width="8.980" height="84.40" fill="#bdbdbd"/><rect x="740.10" y="440.10" width="8.980" height="39.70" rx="1.3" fill="#0f9d58"/><rect x="740.10" y="442.10" width="8.980" height="37.70" fill="#0f9d58"/><rect x="740.10" y="479.80" width="8.980" height="1" fill="#ffffff"/><rect x="749.08" y="480.80" width="8.980" height="84.40" fill="#bdbdbd"/><rect x="749.08" y="440.10" width="8.980" height="39.70" rx="1.3" fill="#0f9d58"/><rect x="749.08" y="442.10" width="8.980" height="37.70" fill="#0f9d58"/><rect x="749.08" y="479.80" width="8.980" height="1" fill="#ffffff"/><rect x="758.06" y="480.80" width="8.980" height="84.40" fill="#bdbdbd"/><rect x="758.06" y="440.10" width="8.980" height="39.70" rx="1.3" fill="#0f9d58"/><rect x="758.06" y="442.10" width="8.980" height="37.70" fill="#0f9d58"/><rect x="758.06" y="479.80" width="8.980" height="1" fill="#ffffff"/><rect x="767.04" y="480.80" width="8.980" height="84.40" fill="#bdbdbd"/><rect x="767.04" y="440.10" width="8.980" height="39.70" rx="1.3" fill="#0f9d58"/><rect x="767.04" y="442.10" width="8.980" height="37.70" fill="#0f9d58"/><rect x="767.04" y="479.80" width="8.980" height="1" fill="#ffffff"/><rect x="776.02" y="480.80" width="8.980" height="84.40" fill="#bdbdbd"/><rect x="776.02" y="440.90" width="8.980" height="38.90" rx="1.3" fill="#0f9d58"/><rect x="776.02" y="442.90" width="8.980" height="36.90" fill="#0f9d58"/><rect x="776.02" y="479.80" width="8.980" height="1" fill="#ffffff"/><rect x="785.00" y="480.80" width="8.980" height="84.40" fill="#bdbdbd"/><rect x="785.00" y="440.90" width="8.980" height="38.90" rx="1.3" fill="#0f9d58"/><rect x="785.00" y="442.90" width="8.980" height="36.90" fill="#0f9d58"/><rect x="785.00" y="479.80" width="8.980" height="1" fill="#ffffff"/><rect x="793.98" y="480.80" width="8.980" height="84.40" fill="#bdbdbd"/><rect x="793.98" y="440.90" width="8.980" height="38.90" rx="1.3" fill="#0f9d58"/><rect x="793.98" y="442.90" width="8.980" height="36.90" fill="#0f9d58"/><rect x="793.98" y="479.80" width="8.980" height="1" fill="#ffffff"/><rect x="802.96" y="477.50" width="8.980" height="87.70" fill="#bdbdbd"/><rect x="802.96" y="443.10" width="8.980" height="33.40" rx="1.3" fill="#0f9d58"/><rect x="802.96" y="445.10" width="8.980" height="31.40" fill="#0f9d58"/><rect x="802.96" y="476.50" width="8.980" height="1" fill="#ffffff"/><rect x="811.94" y="477.50" width="8.980" height="87.70" fill="#bdbdbd"/><rect x="811.94" y="443.10" width="8.980" height="33.40" rx="1.3" fill="#0f9d58"/><rect x="811.94" y="445.10" width="8.980" height="31.40" fill="#0f9d58"/><rect x="811.94" y="476.50" width="8.980" height="1" fill="#ffffff"/><rect x="820.92" y="477.50" width="8.980" height="87.70" fill="#bdbdbd"/><rect x="820.92" y="443.10" width="8.980" height="33.40" rx="1.3" fill="#0f9d58"/><rect x="820.92" y="445.10" width="8.980" height="31.40" fill="#0f9d58"/><rect x="820.92" y="476.50" width="8.980" height="1" fill="#ffffff"/><rect x="829.90" y="477.50" width="8.980" height="87.70" fill="#bdbdbd"/><rect x="829.90" y="443.10" width="8.980" height="33.40" rx="1.3" fill="#0f9d58"/><rect x="829.90" y="445.10" width="8.980" height="31.40" fill="#0f9d58"/><rect x="829.90" y="476.50" width="8.980" height="1" fill="#ffffff"/><rect x="838.88" y="490.50" width="8.980" height="74.70" fill="#bdbdbd"/><rect x="838.88" y="455.50" width="8.980" height="34.00" rx="1.3" fill="#0f9d58"/><rect x="838.88" y="457.50" width="8.980" height="32.00" fill="#0f9d58"/><rect x="838.88" y="489.50" width="8.980" height="1" fill="#ffffff"/><rect x="847.86" y="490.50" width="8.980" height="74.70" fill="#bdbdbd"/><rect x="847.86" y="455.50" width="8.980" height="34.00" rx="1.3" fill="#0f9d58"/><rect x="847.86" y="457.50" width="8.980" height="32.00" fill="#0f9d58"/><rect x="847.86" y="489.50" width="8.980" height="1" fill="#ffffff"/><rect x="856.84" y="490.50" width="8.980" height="74.70" fill="#bdbdbd"/><rect x="856.84" y="455.50" width="8.980" height="34.00" rx="1.3" fill="#0f9d58"/><rect x="856.84" y="457.50" width="8.980" height="32.00" fill="#0f9d58"/><rect x="856.84" y="489.50" width="8.980" height="1" fill="#ffffff"/><rect x="865.82" y="487.60" width="8.980" height="77.60" fill="#bdbdbd"/><rect x="865.82" y="455.40" width="8.980" height="31.20" rx="1.3" fill="#0f9d58"/><rect x="865.82" y="457.40" width="8.980" height="29.20" fill="#0f9d58"/><rect x="865.82" y="486.60" width="8.980" height="1" fill="#ffffff"/><rect x="874.80" y="487.60" width="8.980" height="77.60" fill="#bdbdbd"/><rect x="874.80" y="455.40" width="8.980" height="31.20" rx="1.3" fill="#0f9d58"/><rect x="874.80" y="457.40" width="8.980" height="29.20" fill="#0f9d58"/><rect x="874.80" y="486.60" width="8.980" height="1" fill="#ffffff"/><rect x="883.78" y="487.60" width="8.980" height="77.60" fill="#bdbdbd"/><rect x="883.78" y="455.40" width="8.980" height="31.20" rx="1.3" fill="#0f9d58"/><rect x="883.78" y="457.40" width="8.980" height="29.20" fill="#0f9d58"/><rect x="883.78" y="486.60" width="8.980" height="1" fill="#ffffff"/><rect x="892.76" y="487.60" width="8.980" height="77.60" fill="#bdbdbd"/><rect x="892.76" y="455.40" width="8.980" height="31.20" rx="1.3" fill="#0f9d58"/><rect x="892.76" y="457.40" width="8.980" height="29.20" fill="#0f9d58"/><rect x="892.76" y="486.60" width="8.980" height="1" fill="#ffffff"/><rect x="901.74" y="486.00" width="8.980" height="79.20" fill="#bdbdbd"/><rect x="901.74" y="454.60" width="8.980" height="30.40" rx="1.3" fill="#0f9d58"/><rect x="901.74" y="456.60" width="8.980" height="28.40" fill="#0f9d58"/><rect x="901.74" y="485.00" width="8.980" height="1" fill="#ffffff"/><rect x="910.72" y="486.00" width="8.980" height="79.20" fill="#bdbdbd"/><rect x="910.72" y="454.60" width="8.980" height="30.40" rx="1.3" fill="#0f9d58"/><rect x="910.72" y="456.60" width="8.980" height="28.40" fill="#0f9d58"/><rect x="910.72" y="485.00" width="8.980" height="1" fill="#ffffff"/><rect x="919.70" y="486.00" width="8.980" height="79.20" fill="#bdbdbd"/><rect x="919.70" y="454.60" width="8.980" height="30.40" rx="1.3" fill="#0f9d58"/><rect x="919.70" y="456.60" width="8.980" height="28.40" fill="#0f9d58"/><rect x="919.70" y="485.00" width="8.980" height="1" fill="#ffffff"/><rect x="928.68" y="487.70" width="8.980" height="77.50" fill="#bdbdbd"/><rect x="928.68" y="456.60" width="8.980" height="30.10" rx="1.3" fill="#0f9d58"/><rect x="928.68" y="458.60" width="8.980" height="28.10" fill="#0f9d58"/><rect x="928.68" y="486.70" width="8.980" height="1" fill="#ffffff"/><rect x="937.66" y="487.70" width="8.980" height="77.50" fill="#bdbdbd"/><rect x="937.66" y="456.60" width="8.980" height="30.10" rx="1.3" fill="#0f9d58"/><rect x="937.66" y="458.60" width="8.980" height="28.10" fill="#0f9d58"/><rect x="937.66" y="486.70" width="8.980" height="1" fill="#ffffff"/><rect x="946.64" y="487.70" width="8.980" height="77.50" fill="#bdbdbd"/><rect x="946.64" y="456.60" width="8.980" height="30.10" rx="1.3" fill="#0f9d58"/><rect x="946.64" y="458.60" width="8.980" height="28.10" fill="#0f9d58"/><rect x="946.64" y="486.70" width="8.980" height="1" fill="#ffffff"/><rect x="955.62" y="487.70" width="8.980" height="77.50" fill="#bdbdbd"/><rect x="955.62" y="456.60" width="8.980" height="30.10" rx="1.3" fill="#0f9d58"/><rect x="955.62" y="458.60" width="8.980" height="28.10" fill="#0f9d58"/><rect x="955.62" y="486.70" width="8.980" height="1" fill="#ffffff"/><rect x="964.60" y="492.00" width="8.980" height="73.20" fill="#bdbdbd"/><rect x="964.60" y="459.70" width="8.980" height="31.30" rx="1.3" fill="#0f9d58"/><rect x="964.60" y="461.70" width="8.980" height="29.30" fill="#0f9d58"/><rect x="964.60" y="491.00" width="8.980" height="1" fill="#ffffff"/><rect x="973.58" y="492.00" width="8.980" height="73.20" fill="#bdbdbd"/><rect x="973.58" y="459.70" width="8.980" height="31.30" rx="1.3" fill="#0f9d58"/><rect x="973.58" y="461.70" width="8.980" height="29.30" fill="#0f9d58"/><rect x="973.58" y="491.00" width="8.980" height="1" fill="#ffffff"/><rect x="982.56" y="492.00" width="8.980" height="73.20" fill="#bdbdbd"/><rect x="982.56" y="459.70" width="8.980" height="31.30" rx="1.3" fill="#0f9d58"/><rect x="982.56" y="461.70" width="8.980" height="29.30" fill="#0f9d58"/><rect x="982.56" y="491.00" width="8.980" height="1" fill="#ffffff"/><rect x="991.54" y="492.90" width="8.980" height="72.30" fill="#bdbdbd"/><rect x="991.54" y="462.30" width="8.980" height="29.60" rx="1.3" fill="#0f9d58"/><rect x="991.54" y="464.30" width="8.980" height="27.60" fill="#0f9d58"/><rect x="991.54" y="491.90" width="8.980" height="1" fill="#ffffff"/><rect x="1000.52" y="492.90" width="8.980" height="72.30" fill="#bdbdbd"/><rect x="1000.52" y="462.30" width="8.980" height="29.60" rx="1.3" fill="#0f9d58"/><rect x="1000.52" y="464.30" width="8.980" height="27.60" fill="#0f9d58"/><rect x="1000.52" y="491.90" width="8.980" height="1" fill="#ffffff"/><rect x="1009.50" y="492.90" width="8.980" height="72.30" fill="#bdbdbd"/><rect x="1009.50" y="462.30" width="8.980" height="29.60" rx="1.3" fill="#0f9d58"/><rect x="1009.50" y="464.30" width="8.980" height="27.60" fill="#0f9d58"/><rect x="1009.50" y="491.90" width="8.980" height="1" fill="#ffffff"/><rect x="1018.48" y="492.90" width="8.980" height="72.30" fill="#bdbdbd"/><rect x="1018.48" y="462.30" width="8.980" height="29.60" rx="1.3" fill="#0f9d58"/><rect x="1018.48" y="464.30" width="8.980" height="27.60" fill="#0f9d58"/><rect x="1018.48" y="491.90" width="8.980" height="1" fill="#ffffff"/><rect x="1027.46" y="491.70" width="8.980" height="73.50" fill="#bdbdbd"/><rect x="1027.46" y="462.30" width="8.980" height="28.40" rx="1.3" fill="#0f9d58"/><rect x="1027.46" y="464.30" width="8.980" height="26.40" fill="#0f9d58"/><rect x="1027.46" y="490.70" width="8.980" height="1" fill="#ffffff"/><rect x="1036.44" y="491.70" width="8.980" height="73.50" fill="#bdbdbd"/><rect x="1036.44" y="462.30" width="8.980" height="28.40" rx="1.3" fill="#0f9d58"/><rect x="1036.44" y="464.30" width="8.980" height="26.40" fill="#0f9d58"/><rect x="1036.44" y="490.70" width="8.980" height="1" fill="#ffffff"/><rect x="1045.42" y="491.70" width="8.980" height="73.50" fill="#bdbdbd"/><rect x="1045.42" y="462.30" width="8.980" height="28.40" rx="1.3" fill="#0f9d58"/><rect x="1045.42" y="464.30" width="8.980" height="26.40" fill="#0f9d58"/><rect x="1045.42" y="490.70" width="8.980" height="1" fill="#ffffff"/><rect x="1054.40" y="488.00" width="8.980" height="77.20" fill="#bdbdbd"/><rect x="1054.40" y="462.30" width="8.980" height="24.70" rx="1.3" fill="#0f9d58"/><rect x="1054.40" y="464.30" width="8.980" height="22.70" fill="#0f9d58"/><rect x="1054.40" y="487.00" width="8.980" height="1" fill="#ffffff"/><rect x="1063.38" y="488.00" width="8.980" height="77.20" fill="#bdbdbd"/><rect x="1063.38" y="462.30" width="8.980" height="24.70" rx="1.3" fill="#0f9d58"/><rect x="1063.38" y="464.30" width="8.980" height="22.70" fill="#0f9d58"/><rect x="1063.38" y="487.00" width="8.980" height="1" fill="#ffffff"/><rect x="1072.36" y="488.00" width="8.980" height="77.20" fill="#bdbdbd"/><rect x="1072.36" y="462.30" width="8.980" height="24.70" rx="1.3" fill="#0f9d58"/><rect x="1072.36" y="464.30" width="8.980" height="22.70" fill="#0f9d58"/><rect x="1072.36" y="487.00" width="8.980" height="1" fill="#ffffff"/><rect x="1081.34" y="488.00" width="8.980" height="77.20" fill="#bdbdbd"/><rect x="1081.34" y="462.30" width="8.980" height="24.70" rx="1.3" fill="#0f9d58"/><rect x="1081.34" y="464.30" width="8.980" height="22.70" fill="#0f9d58"/><rect x="1081.34" y="487.00" width="8.980" height="1" fill="#ffffff"/><rect x="1090.32" y="477.70" width="8.980" height="87.50" fill="#bdbdbd"/><rect x="1090.32" y="457.40" width="8.980" height="19.30" rx="1.3" fill="#0f9d58"/><rect x="1090.32" y="459.40" width="8.980" height="17.30" fill="#0f9d58"/><rect x="1090.32" y="476.70" width="8.980" height="1" fill="#ffffff"/><rect x="1099.30" y="477.70" width="8.980" height="87.50" fill="#bdbdbd"/><rect x="1099.30" y="457.40" width="8.980" height="19.30" rx="1.3" fill="#0f9d58"/><rect x="1099.30" y="459.40" width="8.980" height="17.30" fill="#0f9d58"/><rect x="1099.30" y="476.70" width="8.980" height="1" fill="#ffffff"/><rect x="1108.28" y="477.70" width="8.980" height="87.50" fill="#bdbdbd"/><rect x="1108.28" y="457.40" width="8.980" height="19.30" rx="1.3" fill="#0f9d58"/><rect x="1108.28" y="459.40" width="8.980" height="17.30" fill="#0f9d58"/><rect x="1108.28" y="476.70" width="8.980" height="1" fill="#ffffff"/><rect x="1117.26" y="476.00" width="8.980" height="89.20" fill="#bdbdbd"/><rect x="1117.26" y="457.40" width="8.980" height="17.60" rx="1.3" fill="#0f9d58"/><rect x="1117.26" y="459.40" width="8.980" height="15.60" fill="#0f9d58"/><rect x="1117.26" y="475.00" width="8.980" height="1" fill="#ffffff"/><rect x="1126.24" y="476.00" width="8.980" height="89.20" fill="#bdbdbd"/><rect x="1126.24" y="457.40" width="8.980" height="17.60" rx="1.3" fill="#0f9d58"/><rect x="1126.24" y="459.40" width="8.980" height="15.60" fill="#0f9d58"/><rect x="1126.24" y="475.00" width="8.980" height="1" fill="#ffffff"/><rect x="1135.22" y="476.00" width="8.980" height="89.20" fill="#bdbdbd"/><rect x="1135.22" y="457.40" width="8.980" height="17.60" rx="1.3" fill="#0f9d58"/><rect x="1135.22" y="459.40" width="8.980" height="15.60" fill="#0f9d58"/><rect x="1135.22" y="475.00" width="8.980" height="1" fill="#ffffff"/><rect x="1144.20" y="476.00" width="8.980" height="89.20" fill="#bdbdbd"/><rect x="1144.20" y="457.40" width="8.980" height="17.60" rx="1.3" fill="#0f9d58"/><rect x="1144.20" y="459.40" width="8.980" height="15.60" fill="#0f9d58"/><rect x="1144.20" y="475.00" width="8.980" height="1" fill="#ffffff"/><rect x="1153.18" y="473.10" width="8.980" height="92.10" fill="#bdbdbd"/><rect x="1153.18" y="457.40" width="8.980" height="14.70" rx="1.3" fill="#0f9d58"/><rect x="1153.18" y="459.40" width="8.980" height="12.70" fill="#0f9d58"/><rect x="1153.18" y="472.10" width="8.980" height="1" fill="#ffffff"/><rect x="1162.16" y="473.10" width="8.980" height="92.10" fill="#bdbdbd"/><rect x="1162.16" y="457.40" width="8.980" height="14.70" rx="1.3" fill="#0f9d58"/><rect x="1162.16" y="459.40" width="8.980" height="12.70" fill="#0f9d58"/><rect x="1162.16" y="472.10" width="8.980" height="1" fill="#ffffff"/><rect x="1171.14" y="473.10" width="8.980" height="92.10" fill="#bdbdbd"/><rect x="1171.14" y="457.40" width="8.980" height="14.70" rx="1.3" fill="#0f9d58"/><rect x="1171.14" y="459.40" width="8.980" height="12.70" fill="#0f9d58"/><rect x="1171.14" y="472.10" width="8.980" height="1" fill="#ffffff"/><rect x="1180.12" y="476.20" width="8.980" height="89.00" fill="#bdbdbd"/><rect x="1180.12" y="457.40" width="8.980" height="17.80" rx="1.3" fill="#0f9d58"/><rect x="1180.12" y="459.40" width="8.980" height="15.80" fill="#0f9d58"/><rect x="1180.12" y="475.20" width="8.980" height="1" fill="#ffffff"/><rect x="1189.10" y="476.20" width="8.980" height="89.00" fill="#bdbdbd"/><rect x="1189.10" y="457.40" width="8.980" height="17.80" rx="1.3" fill="#0f9d58"/><rect x="1189.10" y="459.40" width="8.980" height="15.80" fill="#0f9d58"/><rect x="1189.10" y="475.20" width="8.980" height="1" fill="#ffffff"/><rect x="1198.08" y="476.20" width="8.980" height="89.00" fill="#bdbdbd"/><rect x="1198.08" y="457.40" width="8.980" height="17.80" rx="1.3" fill="#0f9d58"/><rect x="1198.08" y="459.40" width="8.980" height="15.80" fill="#0f9d58"/><rect x="1198.08" y="475.20" width="8.980" height="1" fill="#ffffff"/><rect x="1207.06" y="476.20" width="8.980" height="89.00" fill="#bdbdbd"/><rect x="1207.06" y="457.40" width="8.980" height="17.80" rx="1.3" fill="#0f9d58"/><rect x="1207.06" y="459.40" width="8.980" height="15.80" fill="#0f9d58"/><rect x="1207.06" y="475.20" width="8.980" height="1" fill="#ffffff"/><rect x="1216.04" y="480.80" width="8.980" height="84.40" fill="#bdbdbd"/><rect x="1216.04" y="455.40" width="8.980" height="24.40" rx="1.3" fill="#0f9d58"/><rect x="1216.04" y="457.40" width="8.980" height="22.40" fill="#0f9d58"/><rect x="1216.04" y="479.80" width="8.980" height="1" fill="#ffffff"/><rect x="1225.02" y="480.80" width="8.980" height="84.40" fill="#bdbdbd"/><rect x="1225.02" y="455.40" width="8.980" height="24.40" rx="1.3" fill="#0f9d58"/><rect x="1225.02" y="457.40" width="8.980" height="22.40" fill="#0f9d58"/><rect x="1225.02" y="479.80" width="8.980" height="1" fill="#ffffff"/><rect x="1234.00" y="480.80" width="8.980" height="84.40" fill="#bdbdbd"/><rect x="1234.00" y="455.40" width="8.980" height="24.40" rx="1.3" fill="#0f9d58"/><rect x="1234.00" y="457.40" width="8.980" height="22.40" fill="#0f9d58"/><rect x="1234.00" y="479.80" width="8.980" height="1" fill="#ffffff"/><rect x="1242.98" y="479.60" width="8.980" height="85.60" fill="#bdbdbd"/><rect x="1242.98" y="455.40" width="8.980" height="23.20" rx="1.3" fill="#0f9d58"/><rect x="1242.98" y="457.40" width="8.980" height="21.20" fill="#0f9d58"/><rect x="1242.98" y="478.60" width="8.980" height="1" fill="#ffffff"/><rect x="1251.96" y="479.60" width="8.980" height="85.60" fill="#bdbdbd"/><rect x="1251.96" y="455.40" width="8.980" height="23.20" rx="1.3" fill="#0f9d58"/><rect x="1251.96" y="457.40" width="8.980" height="21.20" fill="#0f9d58"/><rect x="1251.96" y="478.60" width="8.980" height="1" fill="#ffffff"/><rect x="1260.94" y="479.60" width="8.980" height="85.60" fill="#bdbdbd"/><rect x="1260.94" y="455.40" width="8.980" height="23.20" rx="1.3" fill="#0f9d58"/><rect x="1260.94" y="457.40" width="8.980" height="21.20" fill="#0f9d58"/><rect x="1260.94" y="478.60" width="8.980" height="1" fill="#ffffff"/><rect x="1269.92" y="479.60" width="8.980" height="85.60" fill="#bdbdbd"/><rect x="1269.92" y="455.40" width="8.980" height="23.20" rx="1.3" fill="#0f9d58"/><rect x="1269.92" y="457.40" width="8.980" height="21.20" fill="#0f9d58"/><rect x="1269.92" y="478.60" width="8.980" height="1" fill="#ffffff"/><rect x="524.08" y="435" width="1" height="130.2" fill="#ffffff" opacity="0.22"/><rect x="533.06" y="435" width="1" height="130.2" fill="#ffffff" opacity="0.22"/><rect x="542.04" y="435" width="1" height="130.2" fill="#ffffff" opacity="0.22"/><rect x="551.02" y="435" width="1" height="130.2" fill="#ffffff" opacity="0.22"/><rect x="560.00" y="435" width="1" height="130.2" fill="#ffffff" opacity="0.22"/><rect x="568.98" y="435" width="1" height="130.2" fill="#ffffff" opacity="0.22"/><rect x="577.96" y="435" width="1" height="130.2" fill="#ffffff" opacity="0.22"/><rect x="586.94" y="435" width="1" height="130.2" fill="#ffffff" opacity="0.22"/><rect x="595.92" y="435" width="1" height="130.2" fill="#ffffff" opacity="0.22"/><rect x="604.90" y="435" width="1" height="130.2" fill="#ffffff" opacity="0.22"/><rect x="613.88" y="435" width="1" height="130.2" fill="#ffffff" opacity="0.22"/><rect x="622.86" y="435" width="1" height="130.2" fill="#ffffff" opacity="0.22"/><rect x="631.84" y="435" width="1" height="130.2" fill="#ffffff" opacity="0.22"/><rect x="640.82" y="435" width="1" height="130.2" fill="#ffffff" opacity="0.22"/><rect x="649.80" y="435" width="1" height="130.2" fill="#ffffff" opacity="0.22"/><rect x="658.78" y="435" width="1" height="130.2" fill="#ffffff" opacity="0.22"/><rect x="667.76" y="435" width="1" height="130.2" fill="#ffffff" opacity="0.22"/><rect x="676.74" y="435" width="1" height="130.2" fill="#ffffff" opacity="0.22"/><rect x="685.72" y="435" width="1" height="130.2" fill="#ffffff" opacity="0.22"/><rect x="694.70" y="435" width="1" height="130.2" fill="#ffffff" opacity="0.22"/><rect x="703.68" y="435" width="1" height="130.2" fill="#ffffff" opacity="0.22"/><rect x="712.66" y="435" width="1" height="130.2" fill="#ffffff" opacity="0.22"/><rect x="721.64" y="435" width="1" height="130.2" fill="#ffffff" opacity="0.22"/><rect x="730.62" y="435" width="1" height="130.2" fill="#ffffff" opacity="0.22"/><rect x="739.60" y="435" width="1" height="130.2" fill="#ffffff" opacity="0.22"/><rect x="748.58" y="435" width="1" height="130.2" fill="#ffffff" opacity="0.22"/><rect x="757.56" y="435" width="1" height="130.2" fill="#ffffff" opacity="0.22"/><rect x="766.54" y="435" width="1" height="130.2" fill="#ffffff" opacity="0.22"/><rect x="775.52" y="435" width="1" height="130.2" fill="#ffffff" opacity="0.22"/><rect x="784.50" y="435" width="1" height="130.2" fill="#ffffff" opacity="0.22"/><rect x="793.48" y="435" width="1" height="130.2" fill="#ffffff" opacity="0.22"/><rect x="802.46" y="435" width="1" height="130.2" fill="#ffffff" opacity="0.22"/><rect x="811.44" y="435" width="1" height="130.2" fill="#ffffff" opacity="0.22"/><rect x="820.42" y="435" width="1" height="130.2" fill="#ffffff" opacity="0.22"/><rect x="829.40" y="435" width="1" height="130.2" fill="#ffffff" opacity="0.22"/><rect x="838.38" y="435" width="1" height="130.2" fill="#ffffff" opacity="0.22"/><rect x="847.36" y="435" width="1" height="130.2" fill="#ffffff" opacity="0.22"/><rect x="856.34" y="435" width="1" height="130.2" fill="#ffffff" opacity="0.22"/><rect x="865.32" y="435" width="1" height="130.2" fill="#ffffff" opacity="0.22"/><rect x="874.30" y="435" width="1" height="130.2" fill="#ffffff" opacity="0.22"/><rect x="883.28" y="435" width="1" height="130.2" fill="#ffffff" opacity="0.22"/><rect x="892.26" y="435" width="1" height="130.2" fill="#ffffff" opacity="0.22"/><rect x="901.24" y="435" width="1" height="130.2" fill="#ffffff" opacity="0.22"/><rect x="910.22" y="435" width="1" height="130.2" fill="#ffffff" opacity="0.22"/><rect x="919.20" y="435" width="1" height="130.2" fill="#ffffff" opacity="0.22"/><rect x="928.18" y="435" width="1" height="130.2" fill="#ffffff" opacity="0.22"/><rect x="937.16" y="435" width="1" height="130.2" fill="#ffffff" opacity="0.22"/><rect x="946.14" y="435" width="1" height="130.2" fill="#ffffff" opacity="0.22"/><rect x="955.12" y="435" width="1" height="130.2" fill="#ffffff" opacity="0.22"/><rect x="964.10" y="435" width="1" height="130.2" fill="#ffffff" opacity="0.22"/><rect x="973.08" y="435" width="1" height="130.2" fill="#ffffff" opacity="0.22"/><rect x="982.06" y="435" width="1" height="130.2" fill="#ffffff" opacity="0.22"/><rect x="991.04" y="435" width="1" height="130.2" fill="#ffffff" opacity="0.22"/><rect x="1000.02" y="435" width="1" height="130.2" fill="#ffffff" opacity="0.22"/><rect x="1009.00" y="435" width="1" height="130.2" fill="#ffffff" opacity="0.22"/><rect x="1017.98" y="435" width="1" height="130.2" fill="#ffffff" opacity="0.22"/><rect x="1026.96" y="435" width="1" height="130.2" fill="#ffffff" opacity="0.22"/><rect x="1035.94" y="435" width="1" height="130.2" fill="#ffffff" opacity="0.22"/><rect x="1044.92" y="435" width="1" height="130.2" fill="#ffffff" opacity="0.22"/><rect x="1053.90" y="435" width="1" height="130.2" fill="#ffffff" opacity="0.22"/><rect x="1062.88" y="435" width="1" height="130.2" fill="#ffffff" opacity="0.22"/><rect x="1071.86" y="435" width="1" height="130.2" fill="#ffffff" opacity="0.22"/><rect x="1080.84" y="435" width="1" height="130.2" fill="#ffffff" opacity="0.22"/><rect x="1089.82" y="435" width="1" height="130.2" fill="#ffffff" opacity="0.22"/><rect x="1098.80" y="435" width="1" height="130.2" fill="#ffffff" opacity="0.22"/><rect x="1107.78" y="435" width="1" height="130.2" fill="#ffffff" opacity="0.22"/><rect x="1116.76" y="435" width="1" height="130.2" fill="#ffffff" opacity="0.22"/><rect x="1125.74" y="435" width="1" height="130.2" fill="#ffffff" opacity="0.22"/><rect x="1134.72" y="435" width="1" height="130.2" fill="#ffffff" opacity="0.22"/><rect x="1143.70" y="435" width="1" height="130.2" fill="#ffffff" opacity="0.22"/><rect x="1152.68" y="435" width="1" height="130.2" fill="#ffffff" opacity="0.22"/><rect x="1161.66" y="435" width="1" height="130.2" fill="#ffffff" opacity="0.22"/><rect x="1170.64" y="435" width="1" height="130.2" fill="#ffffff" opacity="0.22"/><rect x="1179.62" y="435" width="1" height="130.2" fill="#ffffff" opacity="0.22"/><rect x="1188.60" y="435" width="1" height="130.2" fill="#ffffff" opacity="0.22"/><rect x="1197.58" y="435" width="1" height="130.2" fill="#ffffff" opacity="0.22"/><rect x="1206.56" y="435" width="1" height="130.2" fill="#ffffff" opacity="0.22"/><rect x="1215.54" y="435" width="1" height="130.2" fill="#ffffff" opacity="0.22"/><rect x="1224.52" y="435" width="1" height="130.2" fill="#ffffff" opacity="0.22"/><rect x="1233.50" y="435" width="1" height="130.2" fill="#ffffff" opacity="0.22"/><rect x="1242.48" y="435" width="1" height="130.2" fill="#ffffff" opacity="0.22"/><rect x="1251.46" y="435" width="1" height="130.2" fill="#ffffff" opacity="0.22"/><rect x="1260.44" y="435" width="1" height="130.2" fill="#ffffff" opacity="0.22"/><rect x="1269.42" y="435" width="1" height="130.2" fill="#ffffff" opacity="0.22"/><rect x="477" y="565.2" width="814" height="1.6" fill="#a6a6a6"/></svg>
<div style="position:absolute;left:978.1px;top:570.3px;width:17.8px;height:17.8px;border-radius:50%;background:#9e9e9e;"></div>
<div class="t" style="left:987.0px;transform:translateX(-50%);top:573.56px;font-size:11.5px;color:#fff;font-weight:400;">1</div>
<div style="position:absolute;left:1229.8px;top:570.3px;width:17.8px;height:17.8px;border-radius:50%;background:#9e9e9e;"></div>
<div class="t" style="left:1238.7px;transform:translateX(-50%);top:573.56px;font-size:11.5px;color:#fff;font-weight:400;">1</div>
<div style="position:absolute;left:1265.2px;top:570.3px;width:17.8px;height:17.8px;border-radius:50%;background:#9e9e9e;"></div>
<div class="t" style="left:1274.1px;transform:translateX(-50%);top:573.56px;font-size:11.5px;color:#fff;font-weight:400;">1</div>
<div class="t" style="left:493.15px;transform:translateX(-50%);top:596.90px;font-size:12.4px;color:#70757a;font-weight:400;">8/20/25</div>
<div class="t" style="left:591.93px;transform:translateX(-50%);top:596.90px;font-size:12.4px;color:#70757a;font-weight:400;">8/31/25</div>
<div class="t" style="left:690.71px;transform:translateX(-50%);top:596.90px;font-size:12.4px;color:#70757a;font-weight:400;">9/11/25</div>
<div class="t" style="left:789.49px;transform:translateX(-50%);top:596.90px;font-size:12.4px;color:#70757a;font-weight:400;">9/22/25</div>
<div class="t" style="left:888.27px;transform:translateX(-50%);top:596.90px;font-size:12.4px;color:#70757a;font-weight:400;">10/3/25</div>
<div class="t" style="left:987.05px;transform:translateX(-50%);top:596.90px;font-size:12.4px;color:#70757a;font-weight:400;">10/14/25</div>
<div class="t" style="left:1085.83px;transform:translateX(-50%);top:596.90px;font-size:12.4px;color:#70757a;font-weight:400;">10/25/25</div>
<div class="t" style="left:1184.6100000000001px;transform:translateX(-50%);top:596.90px;font-size:12.4px;color:#70757a;font-weight:400;">11/5/25</div>
<div style="position:absolute;left:460px;top:651px;width:834px;height:63px;border:1px solid #e0e2e4;border-radius:14px;"></div>
<svg style="position:absolute;left:484.80px;top:671.30px;" width="24" height="24" viewBox="0 0 24 24"><path fill="#188038" d="M12 2C6.48 2 2 6.48 2 12s4.48 10 10 10 10-4.48 10-10S17.52 2 12 2zm-2 15l-5-5 1.41-1.41L10 14.17l7.59-7.59L19 8l-9 9z"/></svg>
<div class="t" style="left:524.5px;top:675.64px;font-size:14.6px;color:#3c4043;font-weight:400;">View data about indexed pages</div>
<svg style="position:absolute;left:1250px;top:673px;" width="20" height="20" viewBox="0 0 20 20"><path d="M7.3 4.9 L12.6 10.1 L7.3 15.3" fill="none" stroke="#5f6368" stroke-width="1.9"/></svg>
<div style="position:absolute;left:429px;top:779px;width:897px;height:555px;background:#fff;border-radius:22px;"></div>
<svg style="position:absolute;left:448.40px;top:809.80px;" width="40" height="40" viewBox="0 0 24 24"><path fill="#9e9e9e" d="M12 2C6.48 2 2 6.48 2 12s4.48 10 10 10 10-4.48 10-10S17.52 2 12 2zm1 15h-2v-6h2v6zm0-8h-2V7h2v2z"/></svg>
<div class="t" style="left:512px;top:812.11px;font-size:21.6px;color:#1f1f1f;font-weight:400;">Why pages aren&rsquo;t indexed</div>
<div class="t" style="left:512px;top:842.91px;font-size:14.4px;color:#70757a;font-weight:400;">Pages that aren&rsquo;t indexed can&rsquo;t be served on Google</div>
<svg style="position:absolute;left:1278.50px;top:820.00px;" width="24" height="24" viewBox="0 0 24 24"><path fill="#444746" d="M10 18h4v-2h-4v2zM3 6v2h18V6H3zm3 7h12v-2H6v2z"/></svg>
<div class="t" style="left:453px;top:906.69px;font-size:11.7px;color:#5f6368;font-weight:400;-webkit-text-stroke:0.2px #5f6368;">Reason</div>
<div class="t" style="left:824.5px;top:906.69px;font-size:11.7px;color:#5f6368;font-weight:400;-webkit-text-stroke:0.2px #5f6368;">Source</div>
<svg style="position:absolute;left:871.00px;top:903.20px;" width="18" height="18" viewBox="0 0 24 24"><path fill="#5f6368" d="M11 18h2v-2h-2v2zm1-16C6.48 2 2 6.48 2 12s4.48 10 10 10 10-4.48 10-10S17.52 2 12 2zm0 18c-4.41 0-8-3.59-8-8s3.59-8 8-8 8 3.59 8 8-3.59 8-8 8zm0-14c-2.21 0-4 1.79-4 4h2c0-1.1.9-2 2-2s2 .9 2 2c0 2-3 1.75-3 5h2c0-2.25 3-2.5 3-5 0-2.21-1.79-4-4-4z"/></svg>
<div class="t" style="left:972px;top:906.44px;font-size:12px;color:#202124;font-weight:400;-webkit-text-stroke:0.35px #202124;">Validation</div>
<svg style="position:absolute;left:1031.00px;top:906.50px;" width="14" height="14" viewBox="0 0 24 24"><path fill="#1f1f1f" d="M20 12l-1.41-1.41L13 16.17V4h-2v12.170l-5.58-5.59L4 12l8 8 8-8z"/></svg>
<div class="t" style="left:1124.7px;top:906.69px;font-size:11.7px;color:#5f6368;font-weight:400;-webkit-text-stroke:0.2px #5f6368;">Trend</div>
<div class="t" style="right:96.79999999999995px;top:906.69px;font-size:11.7px;color:#5f6368;font-weight:400;-webkit-text-stroke:0.2px #5f6368;">Pages</div>
<div style="position:absolute;left:429px;top:940px;width:897px;height:1px;background:#e0e0e0;"></div>
<div class="t" style="left:452.4px;top:957.79px;font-size:13px;color:#202124;font-weight:400;-webkit-text-stroke:0.4px #202124;">Not found (404)</div>
<div class="t" style="left:824.5px;top:958.05px;font-size:12.7px;color:#3c4043;font-weight:400;">Website</div>
<svg style="position:absolute;left:971.60px;top:952.00px;" width="24" height="24" viewBox="0 0 24 24"><path fill="#455a64" d="M12 2C6.48 2 2 6.48 2 12s4.48 10 10 10 10-4.48 10-10S17.52 2 12 2zm1 15h-2v-2h2v2zm0-4h-2V7h2v6z"/></svg>
<div class="t" style="left:1002.8px;top:957.88px;font-size:12.9px;color:#202124;font-weight:400;-webkit-text-stroke:0.4px #202124;">Not Started</div>
<div class="t" style="right:96.79999999999995px;top:957.96px;font-size:12.8px;color:#202124;font-weight:400;-webkit-text-stroke:0.15px #202124;">46</div>
<div class="t" style="left:452.4px;top:1006.03px;font-size:13px;color:#202124;font-weight:400;-webkit-text-stroke:0.4px #202124;">Excluded by &lsquo;noindex&rsquo; tag</div>
<div class="t" style="left:824.5px;top:1006.29px;font-size:12.7px;color:#3c4043;font-weight:400;">Website</div>
<svg style="position:absolute;left:971.60px;top:1000.24px;" width="24" height="24" viewBox="0 0 24 24"><path fill="#455a64" d="M12 2C6.48 2 2 6.48 2 12s4.48 10 10 10 10-4.48 10-10S17.52 2 12 2zm1 15h-2v-2h2v2zm0-4h-2V7h2v6z"/></svg>
<div class="t" style="left:1002.8px;top:1006.12px;font-size:12.9px;color:#202124;font-weight:400;-webkit-text-stroke:0.4px #202124;">Not Started</div>
<div class="t" style="right:96.79999999999995px;top:1006.20px;font-size:12.8px;color:#202124;font-weight:400;-webkit-text-stroke:0.15px #202124;">7</div>
<div class="t" style="left:452.4px;top:1054.27px;font-size:13px;color:#202124;font-weight:400;-webkit-text-stroke:0.4px #202124;">Soft 404</div>
<div class="t" style="left:824.5px;top:1054.53px;font-size:12.7px;color:#3c4043;font-weight:400;">Website</div>
<svg style="position:absolute;left:971.60px;top:1048.48px;" width="24" height="24" viewBox="0 0 24 24"><path fill="#455a64" d="M12 2C6.48 2 2 6.48 2 12s4.48 10 10 10 10-4.48 10-10S17.52 2 12 2zm1 15h-2v-2h2v2zm0-4h-2V7h2v6z"/></svg>
<div class="t" style="left:1002.8px;top:1054.36px;font-size:12.9px;color:#202124;font-weight:400;-webkit-text-stroke:0.4px #202124;">Not Started</div>
<div class="t" style="right:96.79999999999995px;top:1054.44px;font-size:12.8px;color:#202124;font-weight:400;-webkit-text-stroke:0.15px #202124;">3</div>
<div class="t" style="left:452.4px;top:1102.51px;font-size:13px;color:#202124;font-weight:400;-webkit-text-stroke:0.4px #202124;">Blocked due to other 4xx issue</div>
<div class="t" style="left:824.5px;top:1102.77px;font-size:12.7px;color:#3c4043;font-weight:400;">Website</div>
<svg style="position:absolute;left:971.60px;top:1096.72px;" width="24" height="24" viewBox="0 0 24 24"><path fill="#455a64" d="M12 2C6.48 2 2 6.48 2 12s4.48 10 10 10 10-4.48 10-10S17.52 2 12 2zm1 15h-2v-2h2v2zm0-4h-2V7h2v6z"/></svg>
<div class="t" style="left:1002.8px;top:1102.60px;font-size:12.9px;color:#202124;font-weight:400;-webkit-text-stroke:0.4px #202124;">Not Started</div>
<div class="t" style="right:96.79999999999995px;top:1102.68px;font-size:12.8px;color:#202124;font-weight:400;-webkit-text-stroke:0.15px #202124;">1</div>
<div class="t" style="left:452.4px;top:1150.75px;font-size:13px;color:#202124;font-weight:400;-webkit-text-stroke:0.4px #202124;">Duplicate without user-selected canonical</div>
<div class="t" style="left:824.5px;top:1151.01px;font-size:12.7px;color:#3c4043;font-weight:400;">Website</div>
<svg style="position:absolute;left:971.60px;top:1144.96px;" width="24" height="24" viewBox="0 0 24 24"><path fill="#455a64" d="M12 2C6.48 2 2 6.48 2 12s4.48 10 10 10 10-4.48 10-10S17.52 2 12 2zm1 15h-2v-2h2v2zm0-4h-2V7h2v6z"/></svg>
<div class="t" style="left:1002.8px;top:1150.84px;font-size:12.9px;color:#202124;font-weight:400;-webkit-text-stroke:0.4px #202124;">Not Started</div>
<div class="t" style="right:96.79999999999995px;top:1150.92px;font-size:12.8px;color:#202124;font-weight:400;-webkit-text-stroke:0.15px #202124;">1</div>
<div class="t" style="left:452.4px;top:1198.99px;font-size:13px;color:#202124;font-weight:400;-webkit-text-stroke:0.4px #202124;">Crawled - currently not indexed</div>
<div class="t" style="left:824.5px;top:1199.25px;font-size:12.7px;color:#3c4043;font-weight:400;">Google systems</div>
<svg style="position:absolute;left:971.60px;top:1193.20px;" width="24" height="24" viewBox="0 0 24 24"><path fill="#455a64" d="M12 2C6.48 2 2 6.48 2 12s4.48 10 10 10 10-4.48 10-10S17.52 2 12 2zm1 15h-2v-2h2v2zm0-4h-2V7h2v6z"/></svg>
<div class="t" style="left:1002.8px;top:1199.08px;font-size:12.9px;color:#202124;font-weight:400;-webkit-text-stroke:0.4px #202124;">Not Started</div>
<div class="t" style="right:96.79999999999995px;top:1199.16px;font-size:12.8px;color:#202124;font-weight:400;-webkit-text-stroke:0.15px #202124;">13</div>
<div class="t" style="left:452.4px;top:1247.23px;font-size:13px;color:#202124;font-weight:400;">Page with redirect</div>
<div class="t" style="left:824.5px;top:1247.49px;font-size:12.7px;color:#3c4043;font-weight:400;">Website</div>
<div class="t" style="left:979px;top:1247.57px;font-size:12.6px;color:#80868b;font-weight:400;">N/A</div>
<div class="t" style="right:96.79999999999995px;top:1247.40px;font-size:12.8px;color:#202124;font-weight:400;-webkit-text-stroke:0.15px #202124;">0</div>
<svg style="position:absolute;left:0px;top:0px;pointer-events:none;" width="1399" height="1364" viewBox="0 0 1399 1364"><rect x="429" y="988.94" width="897" height="1.1" fill="#e6e6e6"/><path d="M1124 960 L1132.5 960 L1135 958.8 L1150.5 958.8 L1153 957.8 L1158 957.8 L1163 960 L1167 958.8 L1170 958.8 L1174 956 L1177 955.8 L1180 954.6 L1184 956 L1187 956" fill="none" stroke="#707070" stroke-width="1.9" stroke-linejoin="round"/><rect x="429" y="1037.18" width="897" height="1.1" fill="#e6e6e6"/><path d="M1124 1011.9 L1150.5 1011.9 L1152.5 1015 L1187 1015" fill="none" stroke="#707070" stroke-width="1.9" stroke-linejoin="round"/><rect x="429" y="1085.42" width="897" height="1.1" fill="#e6e6e6"/><path d="M1124 1064.2 L1187 1064.2" fill="none" stroke="#707070" stroke-width="1.9" stroke-linejoin="round"/><rect x="429" y="1133.66" width="897" height="1.1" fill="#e6e6e6"/><path d="M1124 1113.1 L1187 1113.1" fill="none" stroke="#707070" stroke-width="1.9" stroke-linejoin="round"/><rect x="429" y="1181.90" width="897" height="1.1" fill="#e6e6e6"/><path d="M1124 1161.5 L1187 1161.5" fill="none" stroke="#707070" stroke-width="1.9" stroke-linejoin="round"/><rect x="429" y="1230.14" width="897" height="1.1" fill="#e6e6e6"/><path d="M1124 1207 L1130 1206.6 L1134 1207.8 L1138 1206.6 L1146 1206.6 L1148 1207.8 L1150 1206.6 L1152 1207.8 L1155 1206.6 L1164 1206.6 L1167 1207.8 L1171 1206.6 L1180 1206.6 L1182 1207.8 L1184 1206.6 L1187 1206.6" fill="none" stroke="#707070" stroke-width="1.9" stroke-linejoin="round"/><rect x="429" y="1278.38" width="897" height="1.1" fill="#e6e6e6"/><path d="M1124 1258.2 L1187 1258.2" fill="none" stroke="#707070" stroke-width="1.9" stroke-linejoin="round"/></svg>
<div class="t" style="left:981.7px;top:1300.16px;font-size:12.8px;color:#70757a;font-weight:400;">Rows per page:</div>
<div class="t" style="left:1088.3px;top:1300.16px;font-size:12.8px;color:#3c4043;font-weight:400;-webkit-text-stroke:0.3px #3c4043;">10</div>
<svg style="position:absolute;left:1110.00px;top:1293.00px;" width="26" height="26" viewBox="0 0 24 24"><path fill="#9e9e9e" d="M7 10l5 5 5-5z"/></svg>
<div class="t" style="left:1165.7px;top:1300.33px;font-size:12.6px;color:#5f6368;font-weight:400;">1-7 of 7</div>
<svg style="position:absolute;left:1240.50px;top:1294.20px;" width="22" height="22" viewBox="0 0 24 24"><path fill="#b0b0b0" d="M15.41 7.41L14 6l-6 6 6 6 1.41-1.41L10.83 12z"/></svg>
<svg style="position:absolute;left:1284.00px;top:1294.60px;" width="22" height="22" viewBox="0 0 24 24"><path fill="#b0b0b0" d="M10 6L8.59 7.41 13.17 12l-4.58 4.59L10 18l6-6z"/></svg>
</body></html>
